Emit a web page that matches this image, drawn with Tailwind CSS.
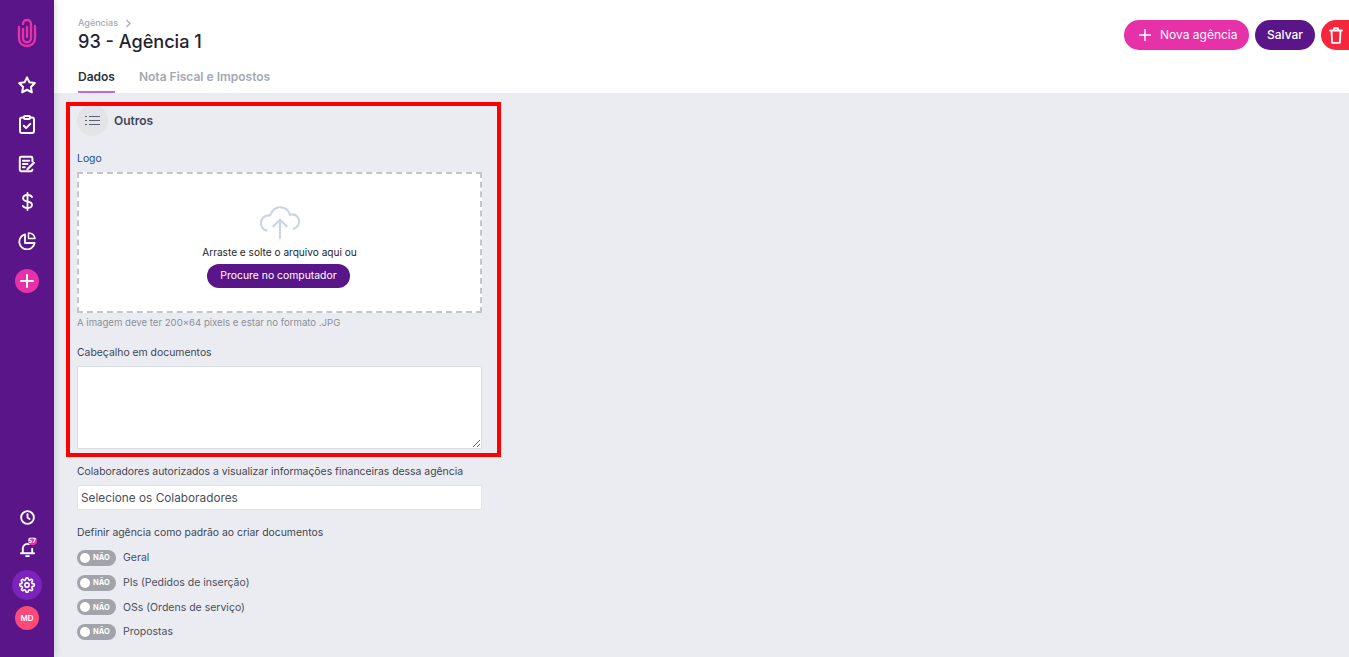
<!DOCTYPE html>
<html lang="pt-BR">
<head>
  <meta charset="UTF-8" />
  <title>Agência</title>
  <script src="https://cdn.jsdelivr.net/npm/@tailwindcss/browser@4"></script>
</head>
<body class="font-['Inter',sans-serif] bg-[#ebecf1] overflow-hidden">
<div class="relative flex h-[657px] w-[1349px] overflow-hidden">

  <!-- Sidebar -->
  <aside class="w-[54px] shrink-0 h-full bg-[#5a1689] flex flex-col items-center shadow-[2px_0_6px_rgba(0,0,0,0.12)] z-10">
    <svg class="mt-[18px] w-[20px] h-[30px] text-[#e631a8]" viewBox="0 0 20 30" fill="none" stroke="currentColor" stroke-width="2.400" stroke-linecap="round">
      <path d="M2 9v11c0 5 3.500 8 8 8s8-3 8-8V8"/>
      <path d="M6 11v9c0 2.800 1.800 4.200 4 4.200s4-1.400 4-4.200V6c0-2.500-1.800-4-4-4S6 3.500 6 6"/>
      <path d="M10 9v10"/>
    </svg>
    <svg class="mt-[27px] w-[20px] h-[20px] text-white" viewBox="0 0 24 24" fill="none" stroke="currentColor" stroke-width="2.400" stroke-linejoin="round"><path d="M12 2.800l2.900 6 6.500.9-4.700 4.600 1.100 6.500-5.800-3.100-5.800 3.100 1.100-6.500L2.600 9.700l6.500-.9z"/></svg>
    <svg class="mt-[20px] w-[16px] h-[19px] text-white" viewBox="0 0 16 19" fill="none" stroke="currentColor" stroke-width="2" stroke-linecap="round" stroke-linejoin="round"><rect x="1" y="2.500" width="14" height="15.500" rx="2"/><rect x="5" y="1" width="6" height="3" rx="1" fill="#5a1689"/><path d="M4.800 10.800l2.300 2.300 4.200-4.200"/></svg>
    <svg class="mt-[21px] w-[18px] h-[18px] text-white" viewBox="0 0 20 20" fill="none" stroke="currentColor" stroke-width="2.200" stroke-linecap="round" stroke-linejoin="round"><path d="M16 7V3.500A1.500 1.500 0 0 0 14.500 2h-11A1.500 1.500 0 0 0 2 3.500v13A1.500 1.500 0 0 0 3.500 18h11a1.500 1.500 0 0 0 1.500-1.500"/><path d="M5.500 6.500h7M5.500 10h5M5.500 13.500h2"/><path d="M10.500 14.500l7-7 1.200 1.200-7 7-1.800.6z" fill="currentColor" stroke-width="1"/></svg>
    <svg class="mt-[19px] w-[11px] h-[19px] text-white" viewBox="0 0 11 19" fill="none" stroke="currentColor" stroke-width="1.800" stroke-linecap="round"><path d="M5.500 1v17"/><path d="M10 5c-.7-1.300-2.200-2-4.500-2C3 3 1.100 4.200 1.100 6.200S3 9 5.500 9.500s4.500 1.200 4.500 3.300S8 16 5.500 16c-2.300 0-3.900-.8-4.600-2.100"/></svg>
    <svg class="mt-[21px] w-[18px] h-[18px] text-white" viewBox="0 0 18 18" fill="none" stroke="currentColor" stroke-width="1.800" stroke-linejoin="round" stroke-linecap="round"><path d="M7 2.300A7.700 7.700 0 1 0 16.600 11H7z"/><path d="M10.500 1v5.500H17A6.800 6.800 0 0 0 10.500 1z" stroke-width="1.500"/></svg>
    <div class="mt-[19px] w-6 h-6 rounded-full bg-[#e631a8] flex items-center justify-center">
      <svg class="w-[14px] h-[14px] text-white" viewBox="0 0 14 14" fill="none" stroke="currentColor" stroke-width="2" stroke-linecap="round"><path d="M7 1v12M1 7h12"/></svg>
    </div>

    <svg class="mt-auto w-[15px] h-[15px] text-white" viewBox="0 0 16 16" fill="none" stroke="currentColor" stroke-width="2" stroke-linecap="round" stroke-linejoin="round"><circle cx="8" cy="8" r="6.800"/><path d="M8 4.500V8l2.200 1.500"/></svg>
    <div class="relative mt-[17px] w-[15px] h-[15px]">
      <svg class="w-[15px] h-[15px] text-white" viewBox="0 0 16 16" fill="none" stroke="currentColor" stroke-width="2" stroke-linecap="round" stroke-linejoin="round"><path d="M3 11.500V7a5 5 0 0 1 6.500-4.700M13 7v4.500M1 12h14M6.500 15h3"/></svg>
      <span class="absolute left-[8px] -top-[5px] w-[9px] h-[8px] rounded-full bg-[#e631a8] text-white text-[6.500px] leading-[8px] font-bold text-center">57</span>
    </div>
    <div class="mt-[13px] w-[30px] h-[30px] rounded-full bg-[#7c22bd] flex items-center justify-center">
      <svg class="w-4 h-4 text-white" viewBox="0 0 24 24" fill="none" stroke="currentColor" stroke-width="2.400" stroke-linecap="round" stroke-linejoin="round"><circle cx="12" cy="12" r="3.200"/><path d="M19.400 15a1.650 1.650 0 0 0 .33 1.820l.06.06a2 2 0 1 1-2.830 2.830l-.06-.06a1.650 1.650 0 0 0-2.800 1.170V21a2 2 0 0 1-4 0v-.09a1.650 1.650 0 0 0-2.820-1.160l-.06.06a2 2 0 1 1-2.830-2.830l.06-.06A1.650 1.650 0 0 0 3.090 14H3a2 2 0 0 1 0-4h.09a1.650 1.650 0 0 0 1.160-2.820l-.06-.06a2 2 0 1 1 2.830-2.830l.06.06A1.650 1.650 0 0 0 10 3.090V3a2 2 0 0 1 4 0v.09a1.650 1.650 0 0 0 2.820 1.160l.06-.06a2 2 0 1 1 2.830 2.830l-.06.06A1.650 1.650 0 0 0 20.910 10H21a2 2 0 0 1 0 4h-.09a1.650 1.650 0 0 0-1.510 1z"/></svg>
    </div>
    <div class="mt-[6px] mb-[27px] w-6 h-6 rounded-full bg-[#fb4a78] text-white text-[8px] font-semibold flex items-center justify-center">MD</div>
  </aside>

  <main class="flex-1 min-w-0 flex flex-col">
    <!-- Header -->
    <header class="h-[93px] shrink-0 bg-white pl-6 pt-[17px] flex justify-between">
      <div>
        <div class="flex items-center gap-[7px] h-3 text-[9px] font-medium text-[#a3a8b5]">
          <span>Agências</span>
          <svg class="w-[7px] h-[9px]" viewBox="0 0 7 9" fill="none" stroke="currentColor" stroke-width="1.200"><path d="M1.500 1L5 4.500 1.500 8"/></svg>
        </div>
        <h1 class="-mt-[1px] text-[18.100px] leading-[26px] font-medium text-[#1f2330]">93 - Agência 1</h1>
        <nav class="mt-[14px] flex gap-6 text-[12px] font-semibold">
          <span class="h-[25px] leading-[18px] text-[#2d3240] border-b-2 border-[#b86be8] rounded-b-[1px]">Dados</span>
          <span class="leading-[18px] text-[#a3a8b5]">Nota Fiscal e Impostos</span>
        </nav>
      </div>
      <div class="flex items-start gap-[6px] pt-[3px]">
        <button class="h-[30px] w-[125px] rounded-full bg-[#e631a8] text-white text-[12px] font-normal flex items-center pl-[15px] gap-[9px]">
          <svg class="w-[12px] h-[12px]" viewBox="0 0 12 12" fill="none" stroke="currentColor" stroke-width="1.500" stroke-linecap="round"><path d="M6 .5v11M.5 6h11"/></svg>
          Nova agência
        </button>
        <button class="h-[30px] w-[60px] rounded-full bg-[#5a1689] text-white text-[12px] font-medium">Salvar</button>
        <button class="h-[30px] w-[28px] rounded-l-full bg-[#f7263c] flex items-center pl-[8px]">
          <svg class="w-[14px] h-[17px] shrink-0 text-white" viewBox="0 0 14 17" fill="none" stroke="currentColor" stroke-width="1.800" stroke-linecap="round" stroke-linejoin="round"><path d="M1 3.500h12M5 3.500V1.200h4v2.300M2.500 3.500l.6 12.300h7.800l.6-12.300"/></svg>
        </button>
      </div>
    </header>

    <!-- Form -->
    <section class="pl-[23px] w-[428px]">
      <div class="mt-[12px] flex items-center gap-[6px]">
        <div class="w-[31px] h-[31px] rounded-full bg-[#e3e4e7] flex items-center justify-center">
          <svg class="w-[15px] h-[11px] text-[#5c6270]" viewBox="0 0 15 11" fill="none" stroke="currentColor" stroke-width="1.200"><path d="M4 1.500h11M4 5.500h11M4 9.500h11M0 1.500h2M0 5.500h2M0 9.500h2"/></svg>
        </div>
        <h2 class="text-[12px] font-semibold text-[#3f4655]">Outros</h2>
      </div>

      <label class="block mt-[16px] text-[10.400px] leading-[14px] text-[#1f4e8c]">Logo</label>
      <div class="mt-[6px] h-[141px] bg-white border-2 border-dashed border-[#c4c5c9] flex flex-col items-center">
        <svg class="mt-[31px] w-[40px] h-[35px] text-[#cbd5e1]" viewBox="0 0 42 35" fill="none" stroke="currentColor" stroke-width="2.200" stroke-linecap="round" stroke-linejoin="round">
          <path d="M7 26C3.500 25 1 22 1 18c0-4.500 3.500-8 8-8 .6 0 1 0 1.500.1C12.500 5 16.500 1.500 21 1.500c5 0 9 3.300 10.500 8 1-.5 1.500-.5 2.500-.5 4 0 7 3.500 7 7.500 0 3.500-2.500 6.500-5.500 7.500"/>
          <path d="M21 34V15M14 21.500l7-7 7 7"/>
        </svg>
        <p class="mt-[5px] text-[10.100px] leading-[14px] text-[#23262f]">Arraste e solte o arquivo aqui ou</p>
        <button class="mt-[5px] mr-[2px] h-6 w-[143px] rounded-full bg-[#5a1689] text-white text-[10.400px] font-normal">Procure no computador</button>
      </div>
      <p class="mt-[3px] text-[9.600px] leading-[14px] text-[#8b8f99]">A imagem deve ter 200×64 pixels e estar no formato .JPG</p>

      <label class="block mt-[16px] text-[10.400px] leading-[14px] text-[#3f4655]">Cabeçalho em documentos</label>
      <textarea class="block mt-[6px] w-full h-[83px] bg-white border border-[#d9dde6] rounded-[2px]"></textarea>

      <label class="block mt-[16px] text-[10.400px] leading-[14px] text-[#3f4655]">Colaboradores autorizados a visualizar informações financeiras dessa agência</label>
      <div class="mt-[6px] h-[25px] bg-white border border-[#e0e3ea] rounded-[2px] pl-[3px] text-[11.800px] leading-[25px] text-[#4a4f5c]">Selecione os Colaboradores</div>

      <label class="block mt-[16px] text-[10.400px] leading-[14px] text-[#3f4655]">Definir agência como padrão ao criar documentos</label>
      <ul class="mt-[10px] flex flex-col gap-[8.700px] text-[10.500px] text-[#4a4f5c]">
        <li class="flex items-center gap-[7px] h-4">
          <span class="w-[39px] h-4 rounded-full bg-[#a3a4ab] flex items-center pl-[3px] gap-[3px]"><span class="w-[10px] h-[10px] rounded-full bg-white"></span><span class="text-[7.500px] font-bold text-white">NÃO</span></span>
          <span>Geral</span>
        </li>
        <li class="flex items-center gap-[7px] h-4">
          <span class="w-[39px] h-4 rounded-full bg-[#a3a4ab] flex items-center pl-[3px] gap-[3px]"><span class="w-[10px] h-[10px] rounded-full bg-white"></span><span class="text-[7.500px] font-bold text-white">NÃO</span></span>
          <span>PIs (Pedidos de inserção)</span>
        </li>
        <li class="flex items-center gap-[7px] h-4">
          <span class="w-[39px] h-4 rounded-full bg-[#a3a4ab] flex items-center pl-[3px] gap-[3px]"><span class="w-[10px] h-[10px] rounded-full bg-white"></span><span class="text-[7.500px] font-bold text-white">NÃO</span></span>
          <span>OSs (Ordens de serviço)</span>
        </li>
        <li class="flex items-center gap-[7px] h-4">
          <span class="w-[39px] h-4 rounded-full bg-[#a3a4ab] flex items-center pl-[3px] gap-[3px]"><span class="w-[10px] h-[10px] rounded-full bg-white"></span><span class="text-[7.500px] font-bold text-white">NÃO</span></span>
          <span>Propostas</span>
        </li>
      </ul>
    </section>
  </main>

  <!-- Red annotation box -->
  <div class="absolute left-[66px] top-[102px] w-[435px] h-[355px] border-4 border-[#ff0000] pointer-events-none z-20"></div>
</div>
</body>
</html>
